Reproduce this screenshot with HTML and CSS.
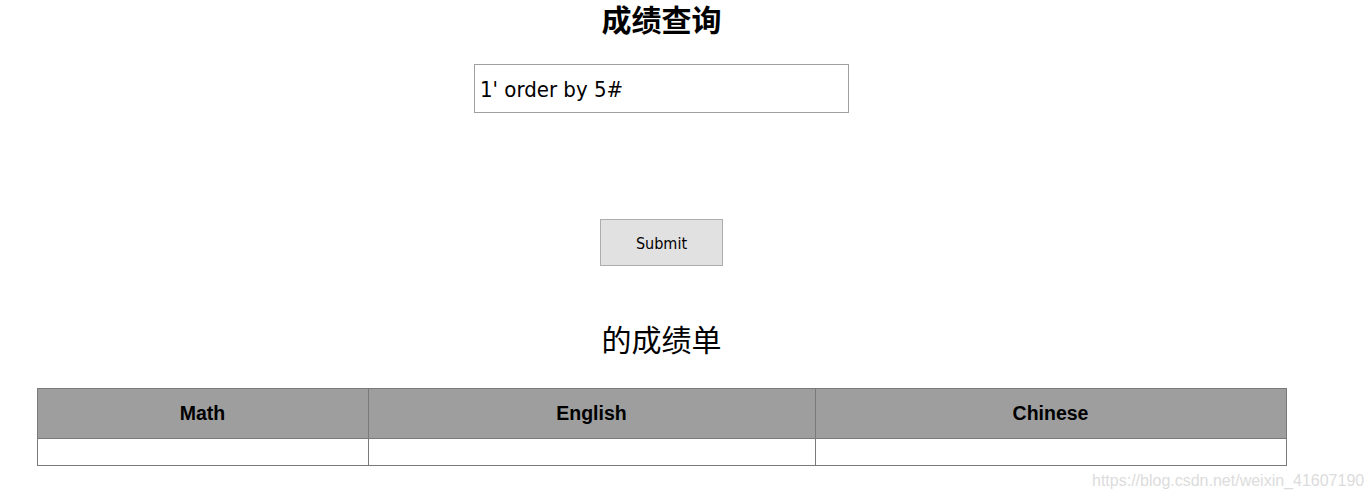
FILE: index.html
```html
<!DOCTYPE html>
<html lang="zh">
<head>
<meta charset="utf-8">
<title>成绩查询</title>
<link rel="stylesheet" href="styles.css">
</head>
<body>
<div class="page">
  <h1 class="title">成绩查询</h1>
  <form class="query">
    <input class="query-input" type="text" value="1' order by 5#">
    <button class="submit" type="button">Submit</button>
  </form>
  <h2 class="subtitle">的成绩单</h2>
  <table class="scores">
    <thead>
      <tr><th class="c1">Math</th><th class="c2">English</th><th class="c3">Chinese</th></tr>
    </thead>
    <tbody>
      <tr><td></td><td></td><td></td></tr>
    </tbody>
  </table>
</div>
<div class="watermark">https://blog.csdn.net/weixin_41607190</div>
</body>
</html>
```
FILE: styles.css
```css
html, body {
  margin: 0;
  padding: 0;
  background: #fff;
}
body {
  position: relative;
  width: 1372px;
  height: 500px;
  overflow: hidden;
  font-family: "Noto Sans CJK SC", sans-serif;
  color: #000;
}
.page {
  width: 1323px;
  display: flex;
  flex-direction: column;
  align-items: center;
}
.title {
  margin: 3px 0 0;
  font-size: 30px;
  line-height: 31px;
  font-weight: bold;
  font-family: "Noto Sans CJK SC", sans-serif;
}
.query {
  display: flex;
  flex-direction: column;
  align-items: center;
  margin-top: 30px;
}
.query-input {
  box-sizing: border-box;
  width: 375px;
  height: 49px;
  margin: 0;
  padding: 2px 5px 0;
  border: 1px solid #a0a0a0;
  font-family: "DejaVu Sans Condensed", "DejaVu Sans", sans-serif;
  font-stretch: condensed;
  font-size: 22px;
  color: #000;
  outline: none;
}
.submit {
  box-sizing: border-box;
  width: 123px;
  height: 47px;
  margin-top: 106px;
  padding: 2px 0 0;
  border: 1px solid #adadad;
  background: #e1e1e1;
  font-family: "DejaVu Sans Condensed", "DejaVu Sans", sans-serif;
  font-stretch: condensed;
  font-size: 16px;
  color: #000;
}
.subtitle {
  margin: 54px 0 0;
  font-size: 30px;
  line-height: 36px;
  font-weight: normal;
  font-family: "Noto Sans CJK SC", sans-serif;
}
.scores {
  margin-top: 32px;
  width: 1249px;
  border-collapse: collapse;
  table-layout: fixed;
}
.scores th, .scores td {
  border: 1px solid #7a7a7a;
  padding: 0;
}
.scores th {
  height: 49px;
  background: #9e9e9e;
  font-family: "Liberation Sans", Arial, sans-serif;
  font-size: 19.5px;
  font-weight: bold;
  text-align: center;
}
.scores td {
  height: 26px;
}
.c1 { width: 330px; }
.c2 { width: 446px; }
.c3 { width: 470px; }
.watermark {
  position: absolute;
  left: 1092px;
  top: 472px;
  font-family: "Liberation Sans", Arial, sans-serif;
  font-size: 16px;
  color: #dcdcdc;
  white-space: nowrap;
}
```
